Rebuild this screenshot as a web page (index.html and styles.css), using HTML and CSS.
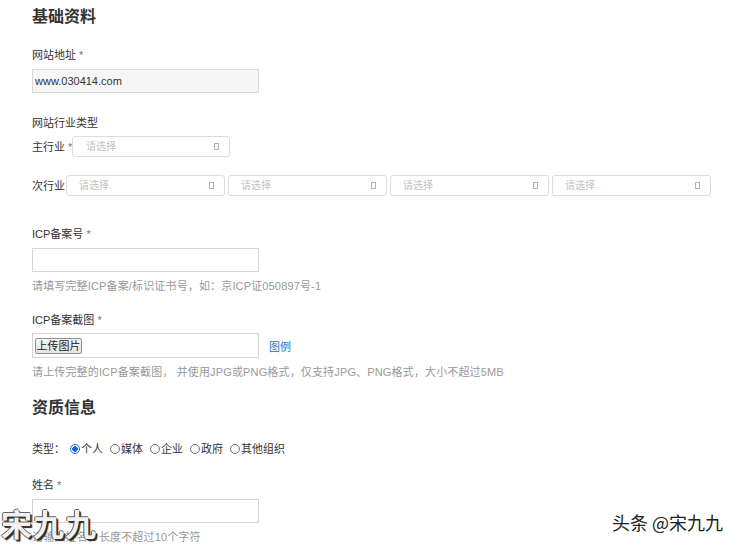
FILE: index.html
```html
<!DOCTYPE html>
<html lang="zh-CN">
<head>
<meta charset="utf-8">
<title>基础资料</title>
<link rel="stylesheet" href="styles.css">
</head>
<body>
<div class="page">
  <h2 class="title t1">基础资料</h2>

  <div class="label m20">网站地址 <span class="req">*</span></div>
  <div class="input disabled">www.030414.com</div>

  <div class="label m22">网站行业类型</div>
  <div class="row m5">
    <span class="rlabel">主行业 <span class="req">*</span></span>
    <div class="select main"><span class="ph">请选择</span><span class="ico"></span></div>
  </div>
  <div class="row m18">
    <span class="rlabel sub">次行业</span>
    <div class="selects">
      <div class="select"><span class="ph">请选择</span><span class="ico"></span></div>
      <div class="select"><span class="ph">请选择</span><span class="ico"></span></div>
      <div class="select"><span class="ph">请选择</span><span class="ico"></span></div>
      <div class="select"><span class="ph">请选择</span><span class="ico"></span></div>
    </div>
  </div>

  <div class="label m30">ICP备案号 <span class="req">*</span></div>
  <div class="input"></div>
  <div class="hint">请填写完整ICP备案/标识证书号，如：京ICP证050897号-1</div>

  <div class="label m18">ICP备案截图 <span class="req">*</span></div>
  <div class="uprow">
    <div class="upbox"><span class="btn">上传图片</span></div>
    <a class="link" href="#">图例</a>
  </div>
  <div class="hint">请上传完整的ICP备案截图， 并使用JPG或PNG格式，仅支持JPG、PNG格式，大小不超过5MB</div>

  <h2 class="title t2">资质信息</h2>

  <div class="radios">
    <span class="rtitle">类型：</span>
    <span class="opt"><span class="radio on"></span>个人</span>
    <span class="opt"><span class="radio"></span>媒体</span>
    <span class="opt"><span class="radio"></span>企业</span>
    <span class="opt"><span class="radio"></span>政府</span>
    <span class="opt"><span class="radio"></span>其他组织</span>
  </div>

  <div class="label m20">姓名 <span class="req">*</span></div>
  <div class="input"></div>
  <div class="hint">请输入姓名，长度不超过10个字符</div>
</div>
<div class="wm-left">宋九九</div>
<div class="wm-right">头条 @宋九九</div>
</body>
</html>
```

FILE: styles.css
```css
html, body {
  margin: 0;
  padding: 0;
  background: #fff;
}
body {
  font-family: "Liberation Sans", "Noto Sans CJK SC", sans-serif;
  font-size: 11px;
  color: #333;
  width: 747px;
  height: 549px;
  overflow: hidden;
  position: relative;
}
.page {
  padding: 7px 0 0 32px;
}
.title {
  margin: 0;
  font-size: 16px;
  line-height: 20px;
  font-weight: bold;
  color: #333;
}
.t2 { margin-top: 18px; }
.label {
  line-height: 16px;
  height: 16px;
  white-space: nowrap;
}
.req { color: #777; }
.m5 { margin-top: 5px; }
.m18 { margin-top: 18px; }
.m20 { margin-top: 20px; }
.m22 { margin-top: 22px; }
.m30 { margin-top: 30px; }
.input {
  box-sizing: border-box;
  width: 227px;
  height: 24px;
  margin-top: 6px;
  border: 1px solid #d4d4d4;
  background: #fff;
  line-height: 22px;
  padding-left: 2px;
  font-size: 11px;
  color: #333;
}
.input.disabled {
  background: #f6f6f6;
  border-color: #d8d8d8;
}
.row {
  display: flex;
  align-items: center;
}
.rlabel {
  flex: none;
  width: 40px;
  line-height: 16px;
  white-space: nowrap;
}
.rlabel.sub { width: 34px; }
.selects {
  display: flex;
  gap: 3px;
}
.select {
  flex: none;
  box-sizing: border-box;
  width: 159px;
  height: 21px;
  border: 1px solid #dcdcdc;
  border-radius: 3px;
  display: flex;
  align-items: center;
  justify-content: space-between;
  padding: 0 10px 0 12px;
  background: #fff;
}
.select.main { width: 158px; padding-left: 13px; }
.ph {
  color: #c2c2c2;
  font-size: 10px;
  line-height: 14px;
}
.ico {
  box-sizing: border-box;
  width: 5px;
  height: 7px;
  border: 1px solid #b3b3b3;
}
.hint {
  margin-top: 6px;
  line-height: 16px;
  color: #999;
  white-space: nowrap;
  letter-spacing: 0.15px;
}
.uprow {
  display: flex;
  align-items: center;
  margin-top: 5px;
}
.upbox {
  box-sizing: border-box;
  width: 227px;
  height: 25px;
  border: 1px solid #d4d4d4;
  padding-left: 2px;
  display: flex;
  align-items: center;
}
.btn {
  box-sizing: border-box;
  height: 16px;
  width: 47px;
  border: 1px solid #909090;
  border-radius: 2px;
  background: linear-gradient(#f5f5f5, #e4e4e4);
  line-height: 14px;
  text-align: center;
  color: #222;
  font-size: 11px;
}
.link {
  margin-left: 10px;
  color: #2d6fbd;
  text-decoration: none;
}
.radios {
  margin-top: 23px;
  display: flex;
  align-items: center;
  line-height: 16px;
}
.rtitle { width: 38px; }
.opt {
  display: flex;
  align-items: center;
  margin-right: 7px;
}
.radio {
  box-sizing: border-box;
  width: 10px;
  height: 10px;
  border: 1px solid #6e6e6e;
  border-radius: 50%;
  margin-right: 1px;
  background: #fff;
}
.radio.on {
  border-color: #1d67d2;
  background: radial-gradient(circle, #1d67d2 0 2.6px, #fff 3px);
}
.wm-left {
  position: absolute;
  left: 1px;
  top: 503px;
  font-size: 31px;
  line-height: 40px;
  font-weight: bold;
  font-family: "Noto Sans CJK SC", sans-serif;
  color: #f1f1f1;
  text-shadow: 1px 1px 0 #333, -1px 0 0 #555, 0 -1px 0 #666, 2px 2px 1px #222;
  letter-spacing: 1px;
}
.wm-right {
  position: absolute;
  left: 612px;
  top: 510px;
  font-size: 18px;
  line-height: 24px;
  font-family: "Noto Sans CJK SC", sans-serif;
  color: #222;
  text-shadow: 1px 1px 0 #fff;
}
```
